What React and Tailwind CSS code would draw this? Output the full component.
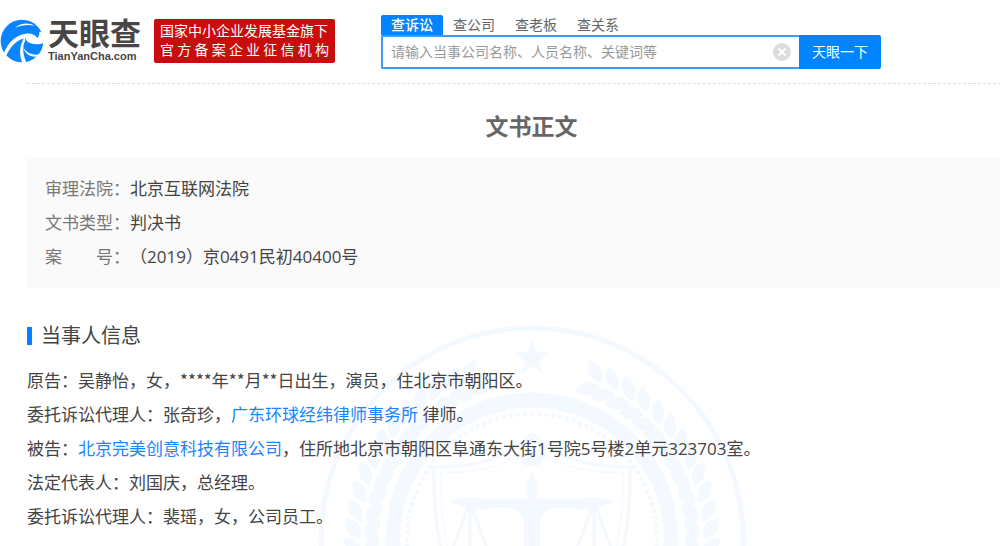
import { useState } from 'react'
import clsx from 'clsx'

const TABS = ['查诉讼', '查公司', '查老板', '查关系']

const CASE_INFO = [
  { label: '审理法院：', value: '北京互联网法院' },
  { label: '文书类型：', value: '判决书' },
  { label: '案　　号：', value: '（2019）京0491民初40400号' },
]

function LogoMark() {
  return (
    <svg viewBox="0 0 132 132" className="h-11 w-11 shrink-0" aria-hidden="true">
      <circle cx="66" cy="66" r="64" fill="#0a84ff" />
      <g fill="#fff">
        <path d="M46 26 C62 12 86 10 104 20 C84 16 64 18 46 26Z" />
        <path d="M8 112 C18 78 42 50 76 44 C92 41 106 46 110 56 C98 50 88 52 80 58 C50 60 28 84 14 122Z" />
        <path d="M78 50 C92 44 108 48 112 57 C116 52 119 46 118 38 L134 42 V70 C120 77 104 77 92 73 C82 69 74 62 78 50Z" />
        <path d="M74 54 C58 78 56 108 68 134 L80 132 C68 108 66 84 76 64Z" />
        <path d="M68 82 C78 102 96 110 120 106 L115 112 C94 116 76 108 68 82Z" />
      </g>
    </svg>
  )
}

// One pair of laurel leaves every 6 degrees, mirrored on both sides
const LEAVES = Array.from({ length: 24 }, (_, i) => 24 + i * 6)
const DOTS = Array.from({ length: 112 }, (_, i) => (i * Math.PI) / 56)

function Laurel() {
  return (
    <g fill="currentColor">
      {LEAVES.map((deg) => (
        <g key={deg} transform={`rotate(${deg} 215 215)`}>
          <path d="M215 44 C214 33 206 28 195 28 C194 39 202 46 215 44Z" />
          <path d="M215 48 C214 59 206 64 195 63 C194 52 202 45 215 48Z" />
        </g>
      ))}
    </g>
  )
}

function Scale() {
  return (
    <g fill="currentColor">
      <path d="M215 149 C209 159 208 165 212 173 L209 175 V176 H221 V175 L218 173 C222 165 221 159 215 149Z" />
      <path d="M133 177 C142 173 152 173 166 174 H264 C278 173 288 173 297 177 C284 185 270 186 258 185 C240 182 226 184 223 198 L222 290 H208 L207 198 C204 184 190 182 172 185 C160 186 146 185 133 177Z" />
      <g fill="none" stroke="currentColor" strokeWidth="3">
        <path d="M151 184 L126 250 M153 184 V250 M155 184 L180 250" />
        <path d="M275 184 L250 250 M277 184 V250 M279 184 L304 250" />
      </g>
      <path d="M122 250 H184 C178 268 128 268 122 250Z M246 250 H308 C302 268 252 268 246 250Z" />
    </g>
  )
}

function CourtSeal() {
  return (
    <svg
      viewBox="0 0 430 430"
      className="pointer-events-none absolute top-9 left-1/2 w-[430px] -translate-x-1/2 text-[#f3f9ff]"
      aria-hidden="true"
    >
      <g fill="none" stroke="currentColor">
        <circle cx="215" cy="215" r="211" strokeWidth="5" />
        <circle cx="215" cy="215" r="139" strokeWidth="15" />
        <path
          d="M117 143 C155 143 185 135 200 122 L215 110 L230 122 C245 135 275 143 313 143 C315 220 300 290 215 330 C130 290 115 220 117 143Z"
          strokeWidth="3"
        />
        <path
          d="M124 149 C158 149 184 143 203 130 M306 149 C272 149 246 143 227 130 M124 149 C123 220 136 284 215 322 C294 284 307 220 306 149"
          strokeWidth="1"
        />
        <path d="M200 126 L215 115 L230 126" strokeWidth="3" />
      </g>
      <g fill="currentColor">
        {DOTS.map((a) => (
          <circle key={a} cx={215 + 125 * Math.cos(a)} cy={215 + 125 * Math.sin(a)} r="2.4" />
        ))}
        <path d="M215 16 L219 28 L233 28 L222 37 L226 50 L215 42 L204 50 L208 37 L197 28 L211 28Z" />
        <path d="M215 124 L219 132 L229 130 L225 138 C222 144 208 144 205 138 L201 130 L211 132Z" />
      </g>
      <Laurel />
      <g transform="matrix(-1 0 0 1 430 0)">
        <Laurel />
      </g>
      <Scale />
    </svg>
  )
}

function SearchBar() {
  const [active, setActive] = useState(TABS[0])
  const [keyword, setKeyword] = useState('')

  return (
    <form className="w-[500px]" onSubmit={(e) => e.preventDefault()}>
      <div className="flex h-5 text-sm leading-5">
        {TABS.map((tab) => (
          <button
            key={tab}
            type="button"
            onClick={() => setActive(tab)}
            className={clsx(
              'rounded-t-xs px-2.5',
              active === tab ? 'bg-[#0084ff] font-medium text-white' : 'text-[#666]'
            )}
          >
            {tab}
          </button>
        ))}
      </div>
      <div className="flex h-[34px]">
        <div className="flex flex-1 items-center rounded-l-xs border-2 border-r-0 border-[#3d9bf9] bg-white px-2">
          <input
            type="text"
            aria-label="搜索"
            value={keyword}
            onChange={(e) => setKeyword(e.target.value)}
            placeholder="请输入当事公司名称、人员名称、关键词等"
            className="min-w-0 flex-1 text-sm text-[#333] outline-none placeholder:text-[#999]"
          />
          <button type="button" aria-label="清空" onClick={() => setKeyword('')}>
            <svg viewBox="0 0 18 18" className="size-[18px]">
              <circle cx="9" cy="9" r="9" fill="#dcdcdc" />
              <path d="M5.5 5.5 L12.5 12.5 M12.5 5.5 L5.5 12.5" stroke="#fff" strokeWidth="1.8" />
            </svg>
          </button>
        </div>
        <button type="submit" className="w-[82px] rounded-r-xs bg-[#0084ff] text-sm text-white">
          天眼一下
        </button>
      </div>
    </form>
  )
}

function Header() {
  return (
    <header className="flex items-start pt-[15px]">
      <a href="#" className="flex items-start pt-1 text-[#4a4545]">
        <LogoMark />
        <span className="ml-1 block w-[106px] font-['Liberation_Sans','Noto_Sans_CJK_SC',sans-serif] font-bold">
          <span className="block text-[31px] leading-8">天眼查</span>
          <span className="block text-[11px] leading-[10px]">TianYanCha.com</span>
        </span>
      </a>
      <div className="mt-1 mr-[46px] h-11 w-[181px] rounded-xs bg-[#c90d0d] px-1.5 pt-0.5 text-sm leading-[19px] text-white">
        <p className="whitespace-nowrap">国家中小企业发展基金旗下</p>
        <p className="[text-align-last:justify]">官方备案企业征信机构</p>
      </div>
      <SearchBar />
    </header>
  )
}

export default function App() {
  return (
    <div className="flex min-h-screen flex-col overflow-hidden bg-white font-['Open_Sans','Noto_Sans_CJK_SC',sans-serif] text-[#444]">
      <Header />
      <main className="mt-3.5 -mr-9 ml-[27px] flex flex-1 flex-col border-t border-dashed border-[#ddd]">
        <h1 className="pt-[26px] text-center text-[23px] leading-8 font-bold text-[#666]">文书正文</h1>
        <dl className="mt-4 bg-[#fafafa] py-3.5 pl-[18px] text-[17px] leading-[34px]">
          {CASE_INFO.map(({ label, value }) => (
            <div key={label} className="flex">
              <dt className="text-[#777]">{label}</dt>
              <dd>{value}</dd>
            </div>
          ))}
        </dl>
        <section className="relative flex-1 overflow-hidden pt-8">
          <CourtSeal />
          <div className="relative">
            <h2 className="flex items-center text-xl leading-8">
              <span className="mr-[9px] h-[18px] w-[5px] bg-[#0084ff]" />
              当事人信息
            </h2>
            <div className="mt-3 text-[17px] leading-[34px]">
              <p>
                原告：吴静怡，女，
                <span className="font-['Noto_Sans_CJK_SC',sans-serif] leading-none">****</span>年
                <span className="font-['Noto_Sans_CJK_SC',sans-serif] leading-none">**</span>月
                <span className="font-['Noto_Sans_CJK_SC',sans-serif] leading-none">**</span>
                日出生，演员，住北京市朝阳区。
              </p>
              <p>
                委托诉讼代理人：张奇珍，
                <a href="#" className="text-[#1a85ff]">广东环球经纬律师事务所</a> 律师。
              </p>
              <p>
                被告：
                <a href="#" className="text-[#1a85ff]">北京完美创意科技有限公司</a>
                ，住所地北京市朝阳区阜通东大街1号院5号楼2单元323703室。
              </p>
              <p>法定代表人：刘国庆，总经理。</p>
              <p>委托诉讼代理人：裴瑶，女，公司员工。</p>
            </div>
          </div>
        </section>
      </main>
    </div>
  )
}
